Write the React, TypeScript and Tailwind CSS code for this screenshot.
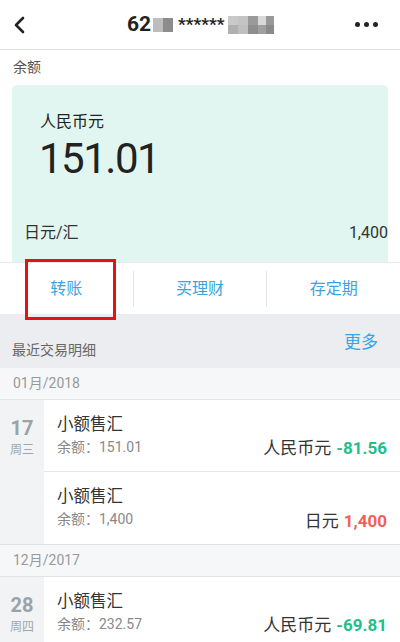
import React from "react";

const font = { fontFamily: 'Roboto, "Noto Sans CJK SC", sans-serif' };

function Row({
  day,
  week,
  balance,
  cur,
  amount,
  color,
  showDate,
  last,
}: {
  day?: string;
  week?: string;
  balance: string;
  cur: string;
  amount: string;
  color: string;
  showDate: boolean;
  last?: boolean;
}) {
  return (
    <div className="flex h-[72px]">
      <div className="w-[44px] bg-[#f1f3f4] flex flex-col items-center pt-[14px]">
        {showDate && (
          <>
            <div className="text-[20px] font-bold leading-[28px] text-[#9aa3a8]">{day}</div>
            <div className="text-[12px] leading-[16px] text-[#a0a7ab]">{week}</div>
          </>
        )}
      </div>
      <div className={`flex-1 bg-white flex justify-between pl-[13px] pr-[13px] ${last ? "" : "border-b border-[#e6e6e6]"}`}>
        <div className="flex flex-col pt-[12px]">
          <div className="text-[16.5px] leading-[26px] text-[#333]">小额售汇</div>
          <div className="text-[14px] leading-[20px] text-[#888] mt-[-1px]">余额：{balance}</div>
        </div>
        <div className="flex items-end pb-[10px]">
          <span className="text-[17px] text-[#333]">{cur}</span>
          <span className="text-[17px] font-bold ml-[5px]" style={{ color }}>
            {amount}
          </span>
        </div>
      </div>
    </div>
  );
}

export default function App() {
  return (
    <div className="w-[400px] h-[642px] overflow-hidden bg-white relative" style={font}>
      {/* header */}
      <div className="h-[50px] flex items-center px-[12px] border-b border-[#e2e2e2]">
        <svg width="16" height="20" viewBox="0 0 16 20">
          <path d="M11 3 L4 10 L11 17" fill="none" stroke="#222" strokeWidth="2.6" strokeLinecap="round" strokeLinejoin="round" />
        </svg>
        <div className="flex items-center ml-[99px]">
          <span className="text-[21px] font-bold text-[#222] leading-none">62</span>
          <div className="flex ml-[2px]">
            <div className="w-[10px] h-[14px] bg-[#bdbdbd]" />
            <div className="w-[10px] h-[14px] bg-[#8c8c8c]" />
          </div>
          <span className="text-[17px] font-bold text-[#222] ml-[5px] leading-none">******</span>
          <div className="flex ml-[4px]">
            <div className="flex flex-col">
              <div className="w-[10px] h-[9px] bg-[#c9c9c9]" />
              <div className="w-[10px] h-[9px] bg-[#b0b0b0]" />
            </div>
            <div className="flex flex-col">
              <div className="w-[10px] h-[9px] bg-[#c4c4c4]" />
              <div className="w-[10px] h-[9px] bg-[#bfbfbf]" />
            </div>
            <div className="flex flex-col">
              <div className="w-[10px] h-[9px] bg-[#9a9a9a]" />
              <div className="w-[10px] h-[9px] bg-[#8e8e8e]" />
            </div>
            <div className="flex flex-col">
              <div className="w-[8px] h-[9px] bg-[#d9d9d9]" />
              <div className="w-[8px] h-[9px] bg-[#a0a0a0]" />
            </div>
            <div className="flex flex-col">
              <div className="w-[8px] h-[9px] bg-[#999]" />
              <div className="w-[8px] h-[9px] bg-[#8a8a8a]" />
            </div>
          </div>
        </div>
        <div className="flex gap-[4px] ml-auto mr-[10px]">
          <div className="w-[5px] h-[5px] rounded-full bg-[#222]" />
          <div className="w-[5px] h-[5px] rounded-full bg-[#222]" />
          <div className="w-[5px] h-[5px] rounded-full bg-[#222]" />
        </div>
      </div>

      {/* balance label */}
      <div className="h-[35px] flex items-center pl-[13px] text-[14px] text-[#555]">余额</div>

      {/* card */}
      <div className="mx-[12px] h-[177px] bg-[#e1f6f1] rounded-t-[5px] flex flex-col">
        <div className="pl-[28px] pt-[27px] text-[16px] leading-[20px] text-[#222]">人民币元</div>
        <div className="pl-[27px] text-[42px] leading-[48px] text-[#222] tracking-[-1.5px] mt-[3px]">151.01</div>
        <div className="mt-auto mb-[17px] flex justify-between items-center pl-[12px]">
          <span className="text-[16px] text-[#333]">日元/汇</span>
          <span className="text-[16px] text-[#333]">1,400</span>
        </div>
      </div>

      {/* actions */}
      <div className="h-[52px] flex items-center bg-white border-t border-[#e8e8e8]">
        {["转账", "买理财", "存定期"].map((t, i) => (
          <div
            key={t}
            className={`flex-1 h-[36px] flex items-center justify-center text-[16px] text-[#3aa3e3] ${i < 2 ? "border-r border-[#e4e4e4]" : ""}`}
          >
            {t}
          </div>
        ))}
      </div>

      {/* recent */}
      <div className="h-[54px] bg-[#ebedf0] flex justify-between px-[12px]">
        <span className="text-[14px] text-[#666] mt-[26px]">最近交易明细</span>
        <span className="text-[17px] text-[#3aa3e3] mt-[16px] mr-[10px]">更多</span>
      </div>

      {/* month 1 */}
      <div className="h-[32px] bg-[#f6f7f8] border-b border-[#e4e4e4] flex items-center pl-[13px] text-[14px] text-[#999]">
        01月/2018
      </div>
      <Row day="17" week="周三" balance="151.01" cur="人民币元" amount="-81.56" color="#1fbf8c" showDate />
      <Row balance="1,400" cur="日元" amount="1,400" color="#f2605a" showDate={false} last />

      {/* month 2 */}
      <div className="h-[33px] bg-[#f6f7f8] border-y border-[#e2e2e6] flex items-center pl-[13px] text-[14px] text-[#999]">
        12月/2017
      </div>
      <Row day="28" week="周四" balance="232.57" cur="人民币元" amount="-69.81" color="#1fbf8c" showDate />

      {/* red annotation box */}
      <div className="absolute left-[25px] top-[259px] w-[91px] h-[61px] border-[3px] border-[#e01414]" />
    </div>
  );
}
